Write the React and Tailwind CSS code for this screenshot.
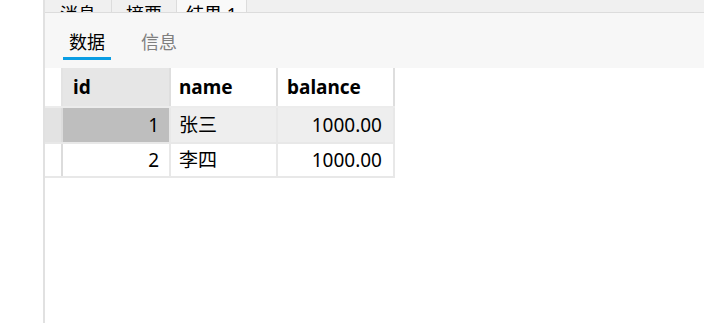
import React from "react";

const font = { fontFamily: '"Noto Sans", "Noto Sans CJK SC", sans-serif' };

const rows = [
  { id: 1, name: "张三", balance: "1000.00", h: "h-[36px]" },
  { id: 2, name: "李四", balance: "1000.00", h: "h-[34px]" },
];

const App = () => {
  return (
    <div className="w-[704px] h-[323px] flex bg-white overflow-hidden text-black" style={font}>
      <div className="w-[43px] shrink-0 bg-white" />
      <div className="flex-1 flex flex-col border-l-2 border-[#e1e1e1]">
        {/* top tab strip, mostly cut off */}
        <div className="h-[13px] flex bg-[#f0f0f0] border-b border-[#dcdcdc] overflow-hidden shrink-0">
          <div className="w-[67px] border-r border-[#dcdcdc] flex items-end justify-center">
            <span className="text-[18px] leading-[22px] mb-[-13px]">消息</span>
          </div>
          <div className="w-[65px] border-r border-[#dcdcdc] flex items-end justify-center">
            <span className="text-[18px] leading-[22px] mb-[-13px]">摘要</span>
          </div>
          <div className="w-[70px] border-r border-[#dcdcdc] bg-[#f9f9f9] flex items-end justify-center">
            <span className="text-[18px] leading-[22px] mb-[-13px]">结果 1</span>
          </div>
        </div>

        {/* sub tabs */}
        <div className="h-[55px] bg-[#f7f7f7] flex items-start pl-[18px] pt-[17px] gap-[30px] shrink-0">
          <div className="flex flex-col items-center">
            <span className="text-[18px] leading-[24px] px-[6px]">数据</span>
            <div className="h-[3px] w-[48px] bg-[#0a9de3] mt-[3px]" />
          </div>
          <span className="text-[18px] leading-[24px] text-[#7f7f7f]">信息</span>
        </div>

        {/* table */}
        <div className="flex flex-col w-[350px]">
          <div className="flex h-[40px] border-b-2 border-[#ececec]">
            <div className="w-[16px] bg-white" />
            <div className="w-[2px] bg-[#e3e3e3]" />
            <div className="w-[106px] bg-[#e6e6e6] flex items-center pl-[10px] font-bold text-[19px]">id</div>
            <div className="w-[2px] bg-[#dedede]" />
            <div className="w-[105px] bg-white flex items-center pl-[8px] font-bold text-[19px]">name</div>
            <div className="w-[2px] bg-[#dedede]" />
            <div className="w-[115px] bg-white flex items-center pl-[9px] font-bold text-[19px]">balance</div>
            <div className="w-[2px] bg-[#dedede]" />
          </div>
          {rows.map((r, i) => {
            const sel = i === 0;
            return (
              <div
                key={r.id}
                className={`flex ${r.h} border-b-2 border-[#e8e8e8] text-[19px] ${sel ? "bg-[#eeeeee]" : "bg-white"}`}
              >
                <div className={`w-[16px] ${sel ? "bg-[#e3e3e3]" : "bg-white"}`} />
                <div className="w-[2px] bg-[#dcdcdc]" />
                <div className={`w-[106px] flex items-center justify-end pr-[10px] ${sel ? "bg-[#bebebe]" : ""}`}>
                  {r.id}
                </div>
                <div className="w-[2px] bg-[#e8e8e8]" />
                <div className="w-[105px] flex items-center pl-[8px]">{r.name}</div>
                <div className="w-[2px] bg-[#e8e8e8]" />
                <div className="w-[115px] flex items-center justify-end pr-[11px]">{r.balance}</div>
                <div className="w-[2px] bg-[#e8e8e8]" />
              </div>
            );
          })}
        </div>
      </div>
    </div>
  );
};

export default App;
